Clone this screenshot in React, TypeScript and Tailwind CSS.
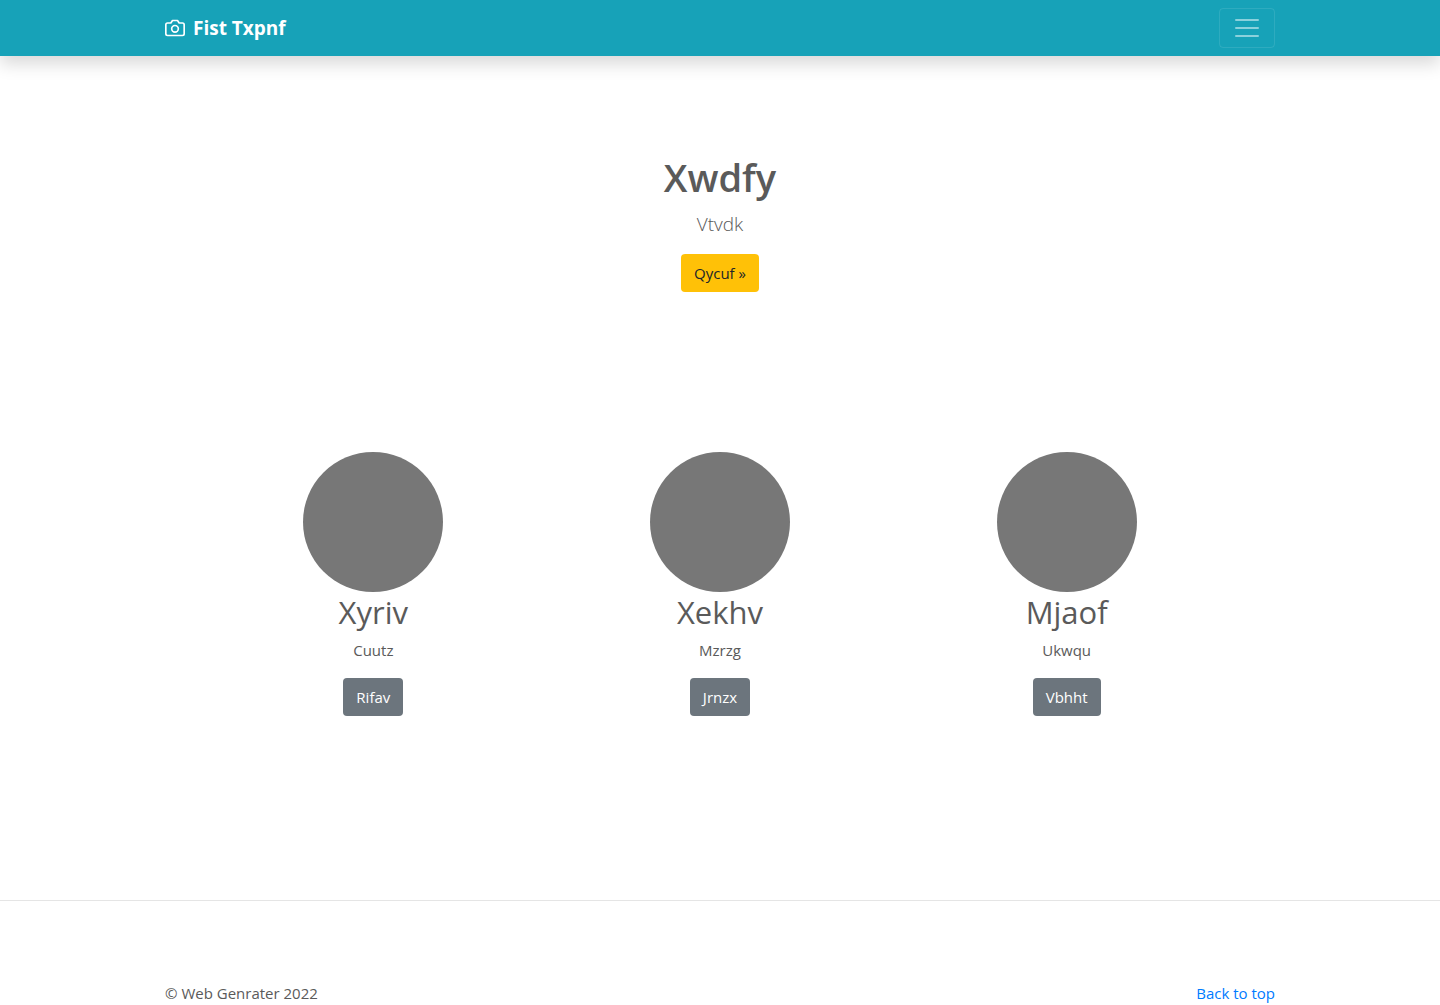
const features = [
  { title: "Xyriv", text: "Cuutz", action: "Rifav" },
  { title: "Xekhv", text: "Mzrzg", action: "Jrnzx" },
  { title: "Mjaof", text: "Ukwqu", action: "Vbhht" },
];

function CameraIcon() {
  return (
    <svg
      className="mr-2"
      width="20"
      height="20"
      viewBox="0 0 24 24"
      fill="none"
      stroke="currentColor"
      strokeWidth="2"
      strokeLinecap="round"
      strokeLinejoin="round"
      aria-hidden="true"
    >
      <path d="M23 19a2 2 0 0 1-2 2H3a2 2 0 0 1-2-2V8a2 2 0 0 1 2-2h4l2-3h6l2 3h4a2 2 0 0 1 2 2z" />
      <circle cx="12" cy="13" r="4" />
    </svg>
  );
}

function Header() {
  return (
    <header className="bg-[#17a2b8] shadow-[0_8px_16px_rgba(0,0,0,0.15)]">
      <div className="mx-auto flex h-14 max-w-[1140px] items-center justify-between px-[15px]">
        <a href="#" className="flex items-center text-[19px] leading-[30px] font-bold text-white">
          <CameraIcon />
          Fist Txpnf
        </a>
        <button
          type="button"
          aria-label="Toggle navigation"
          className="flex h-10 w-14 items-center justify-center rounded border border-white/10 text-white/50"
        >
          <svg width="30" height="30" viewBox="0 0 30 30" stroke="currentColor" strokeWidth="2" strokeLinecap="round" strokeMiterlimit="10" aria-hidden="true">
            <path d="M4 7h22M4 15h22M4 23h22" />
          </svg>
        </button>
      </div>
    </header>
  );
}

export default function App() {
  return (
    <div className="bg-white font-['Open_Sans','Noto_Sans',sans-serif] text-[15px] text-[#5a5a5a]">
      <Header />
      <main>
        <section className="flex flex-col items-center pt-24 text-center">
          <h1 className="mb-1.5 text-[38px] leading-[50px] font-semibold">Xwdfy</h1>
          <p className="mb-3.5 text-[19px] leading-8 font-light">Vtvdk</p>
          <a href="#" className="rounded bg-[#ffc107] px-[13px] py-[7px] leading-6 text-[#212529]">
            Qycuf »
          </a>
        </section>
        <section className="mx-auto mt-40 grid max-w-[1140px] grid-cols-3 px-[50px] text-center">
          {features.map((item) => (
            <div key={item.title} className="flex flex-col items-center">
              <div className="size-[140px] rounded-full bg-[#777]" />
              <h2 className="mb-1.5 text-[31px] leading-10">{item.title}</h2>
              <p className="mb-4 leading-6">{item.text}</p>
              <a href="#" className="rounded bg-[#6c757d] px-[13px] py-[7px] leading-6 text-white">
                {item.action}
              </a>
            </div>
          ))}
        </section>
      </main>
      <hr className="mt-46 border-black/10" />
      <footer className="mx-auto flex max-w-[1140px] justify-between px-[15px] pt-20 leading-6">
        <p>© Web Genrater 2022</p>
        <a href="#" className="text-[#007bff]">
          Back to top
        </a>
      </footer>
    </div>
  );
}
